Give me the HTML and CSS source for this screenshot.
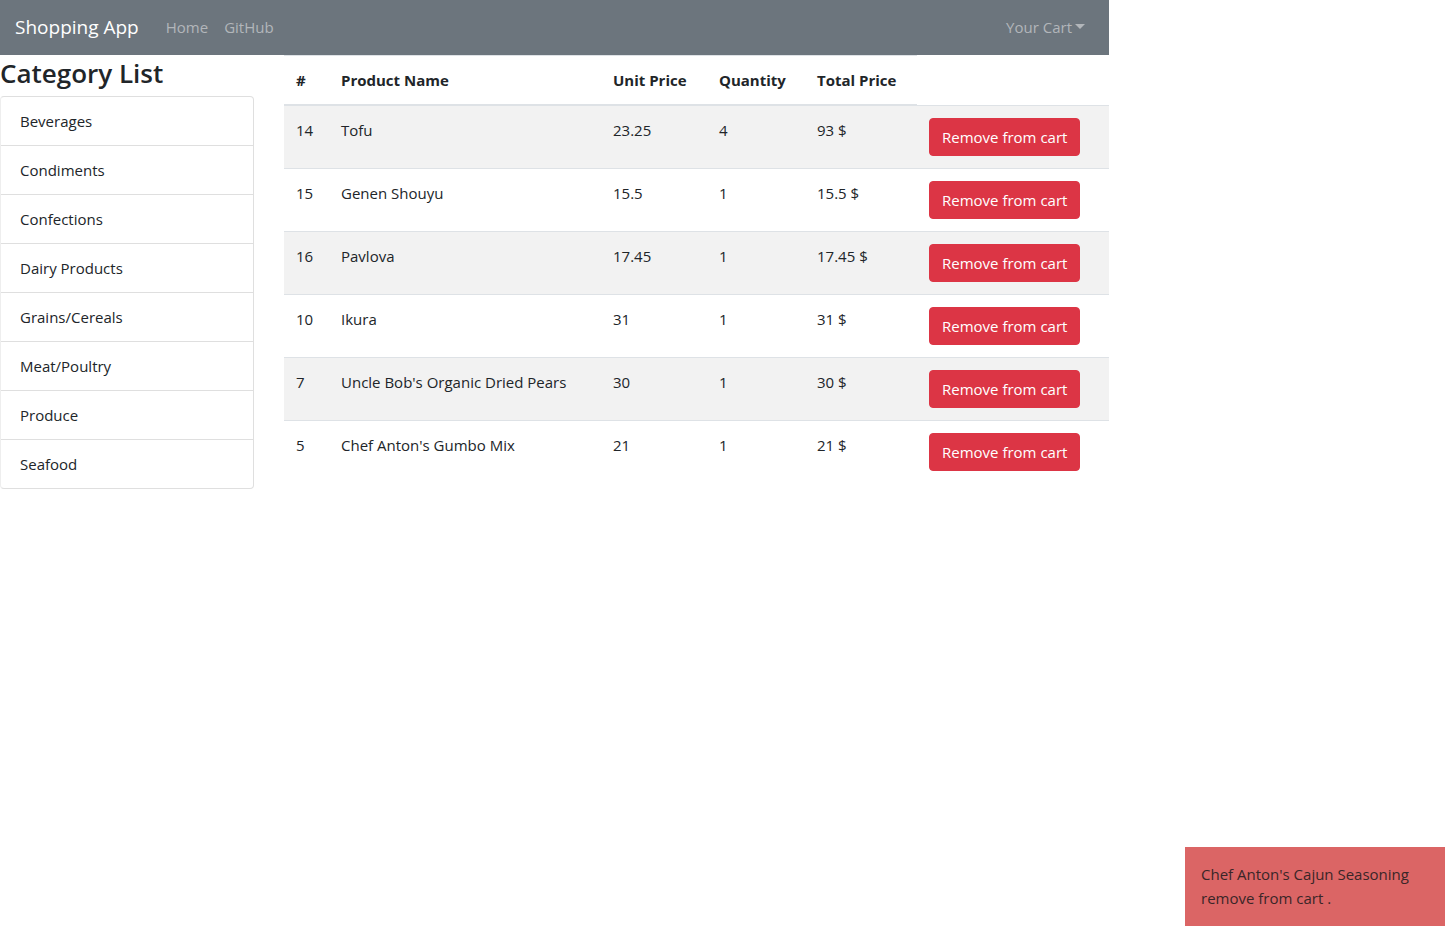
FILE: index.html
```html
<!DOCTYPE html>
<html lang="en">
<head>
<meta charset="utf-8">
<meta name="viewport" content="width=device-width, initial-scale=1">
<title>Shopping App</title>
<link rel="stylesheet" href="styles.css">
</head>
<body>
<div class="container">
  <nav class="navbar">
    <a class="brand" href="#">Shopping App</a>
    <a class="nav-link" href="#">Home</a>
    <a class="nav-link" href="#">GitHub</a>
    <button class="nav-link cart-toggle" type="button" aria-haspopup="true">Your Cart<span class="caret"></span></button>
  </nav>
  <div class="layout">
    <aside class="sidebar">
      <h3 class="heading">Category List</h3>
      <ul class="list">
        <li class="list-item">Beverages</li>
        <li class="list-item">Condiments</li>
        <li class="list-item">Confections</li>
        <li class="list-item">Dairy Products</li>
        <li class="list-item">Grains/Cereals</li>
        <li class="list-item">Meat/Poultry</li>
        <li class="list-item">Produce</li>
        <li class="list-item">Seafood</li>
      </ul>
    </aside>
    <main class="content">
      <table class="table">
        <colgroup>
          <col class="col-id"><col class="col-name"><col class="col-price"><col class="col-quantity"><col class="col-total"><col>
        </colgroup>
        <thead>
          <tr><th>#</th><th>Product Name</th><th>Unit Price</th><th>Quantity</th><th>Total Price</th></tr>
        </thead>
        <tbody>
          <tr><td>14</td><td>Tofu</td><td>23.25</td><td>4</td><td>93 $</td><td><button class="btn" type="button">Remove from cart</button></td></tr>
          <tr><td>15</td><td>Genen Shouyu</td><td>15.5</td><td>1</td><td>15.5 $</td><td><button class="btn" type="button">Remove from cart</button></td></tr>
          <tr><td>16</td><td>Pavlova</td><td>17.45</td><td>1</td><td>17.45 $</td><td><button class="btn" type="button">Remove from cart</button></td></tr>
          <tr><td>10</td><td>Ikura</td><td>31</td><td>1</td><td>31 $</td><td><button class="btn" type="button">Remove from cart</button></td></tr>
          <tr><td>7</td><td>Uncle Bob's Organic Dried Pears</td><td>30</td><td>1</td><td>30 $</td><td><button class="btn" type="button">Remove from cart</button></td></tr>
          <tr><td>5</td><td>Chef Anton's Gumbo Mix</td><td>21</td><td>1</td><td>21 $</td><td><button class="btn" type="button">Remove from cart</button></td></tr>
        </tbody>
      </table>
    </main>
  </div>
</div>
<div class="toast" role="status">Chef Anton's Cajun Seasoning remove from cart .</div>
</body>
</html>
```
FILE: styles.css
```css
*, *::before, *::after {
  box-sizing: border-box;
}

body {
  margin: 0;
  background: #fff;
  color: #212529;
  font-family: "Segoe UI", "Open Sans", "Noto Sans", sans-serif;
  font-size: 15px;
  line-height: 24px;
}

.container {
  max-width: 1109px;
}

.navbar {
  display: flex;
  align-items: center;
  padding: 7px 16px 8px 15px;
  background: #6c757d;
}

.brand {
  margin-right: 19px;
  color: #fff;
  font-size: 19px;
  text-decoration: none;
}

.nav-link {
  padding: 8px;
  border: 0;
  background: none;
  color: #b2b6ba;
  font: inherit;
  text-decoration: none;
}

.cart-toggle {
  display: flex;
  align-items: center;
  gap: 3px;
  margin-left: auto;
}

.caret {
  margin-bottom: 2px;
  border-top: 5px solid;
  border-right: 5px solid transparent;
  border-left: 5px solid transparent;
}

.layout {
  display: flex;
  gap: 30px;
}

.sidebar {
  flex: 0 0 254px;
}

.heading {
  margin: 1px 0 6px;
  font-size: 26px;
  font-weight: 600;
  line-height: 34px;
}

.list {
  margin: 0;
  padding: 0;
  border: 1px solid #dfdfdf;
  border-left-color: #eee;
  border-radius: 4px;
  list-style: none;
}

.list-item {
  padding: 12px 19px;
}

.list-item + .list-item {
  border-top: 1px solid #dfdfdf;
}

.content {
  flex: 1;
  min-width: 0;
}

.table {
  width: 100%;
  border-collapse: collapse;
  table-layout: fixed;
}

.col-id { width: 45px; }
.col-name { width: 272px; }
.col-price { width: 106px; }
.col-quantity { width: 98px; }
.col-total { width: 112px; }

.table th,
.table td {
  padding: 12px;
  border-top: 1px solid #dee2e6;
  text-align: left;
  vertical-align: top;
}

.table th {
  border-bottom: 2px solid #dee2e6;
  font-weight: 700;
  white-space: nowrap;
}

.table tbody tr:nth-child(odd) {
  background: #f2f2f2;
}

.btn {
  display: block;
  padding: 6px 12px;
  border: 1px solid #dc3545;
  border-radius: 4px;
  background: #dc3545;
  color: #fff;
  font: inherit;
  white-space: nowrap;
}

.toast {
  position: fixed;
  right: 7px;
  bottom: 1px;
  width: 260px;
  padding: 15px 16px 16px;
  background: #db6565;
  color: #3a2628;
}
```
